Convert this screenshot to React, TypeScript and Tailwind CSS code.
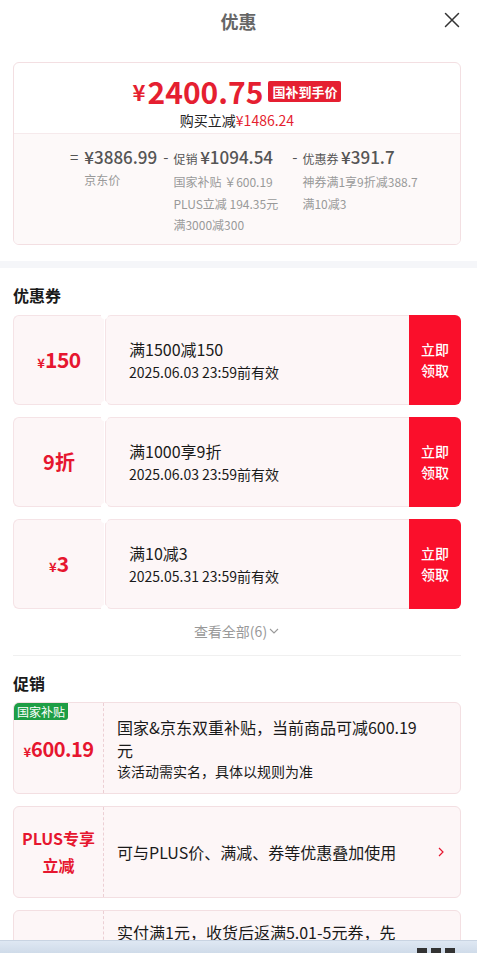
import React from "react";

const font = { fontFamily: '"Noto Sans CJK SC", "Noto Sans", sans-serif' };

function Coupon({ left, title, date }: { left: React.ReactNode; title: string; date: string }) {
  return (
    <div className="relative flex h-[90px] mb-[12px]">
      <div className="w-[91px] shrink-0 rounded-l-[6px] border border-r-0 border-[#f5e3e6] bg-[#fdf6f7] flex items-center justify-center text-[#e6162f] font-bold">
        {left}
      </div>
      <div className="w-[1px] bg-white" />
      <div className="flex-1 border border-r-0 border-[#f5e3e6] bg-[#fdf6f7] rounded-l-[6px] flex flex-col justify-center pl-[23px]">
        <div className="text-[16px] leading-[22px] text-[#1a1a1a]">{title}</div>
        <div className="text-[14px] leading-[20px] text-[#1a1a1a] mt-[2px]">{date}</div>
      </div>
      <div className="w-[52px] shrink-0 bg-[#fa0f2b] rounded-r-[6px] flex flex-col items-center justify-center text-white text-[14px] leading-[21px] font-medium">
        <span>立即</span>
        <span>领取</span>
      </div>
      <div className="absolute left-[88px] top-[-3px] w-[7px] h-[7px] rounded-full bg-white" />
      <div className="absolute left-[88px] bottom-[-3px] w-[7px] h-[7px] rounded-full bg-white" />
    </div>
  );
}

export default function App() {
  return (
    <div className="w-[477px] h-[953px] bg-white relative overflow-hidden" style={font}>
      {/* header */}
      <div className="h-[42px] relative flex items-center justify-center">
        <span className="text-[18px] font-bold text-[#666]">优惠</span>
        <svg className="absolute right-[17px] top-[12px]" width="16" height="16" viewBox="0 0 16 16">
          <path d="M1.5 1.5 L14.5 14.5 M14.5 1.5 L1.5 14.5" stroke="#333" strokeWidth="1.5" strokeLinecap="round" />
        </svg>
      </div>

      {/* summary card */}
      <div className="pl-[13px] pr-[16px] pt-[20px]">
        <div className="rounded-[6px] border border-[#f3dfe2] overflow-hidden">
          <div className="h-[71px] flex flex-col items-center pt-[12px] border-b border-[#f6eaec]">
            <div className="flex items-center h-[32px]">
              <span className="text-[#e51f31] font-bold text-[22px] leading-[32px] mr-[2px]">¥</span>
              <span className="text-[#e51f31] font-bold text-[30px] leading-[32px]">2400.75</span>
              <span className="ml-[5px] bg-[#e51f31] text-white font-bold text-[13px] leading-[21px] px-[4px] rounded-[2px]">国补到手价</span>
            </div>
            <div className="text-[14px] leading-[20px] mt-[3px] text-[#222]">
              购买立减<span className="text-[#e51f31]">¥1486.24</span>
            </div>
          </div>
          <div className="bg-[#fdf9f9] h-[110px] flex pt-[12px] pl-[56px] text-[#555]">
            <div className="flex">
              <span className="text-[15px] leading-[22px] mr-[6px]">=</span>
              <div className="flex flex-col">
                <span className="text-[17px] leading-[22px] font-medium">¥3886.99</span>
                <span className="text-[12px] leading-[22px] text-[#999] mt-[1px]">京东价</span>
              </div>
            </div>
            <div className="flex ml-[6px]">
              <span className="text-[15px] leading-[22px] mr-[5px]">-</span>
              <div className="flex flex-col">
                <span className="leading-[22px]">
                  <span className="text-[12px]">促销 </span>
                  <span className="text-[17px] font-medium">¥1094.54</span>
                </span>
                <span className="text-[12px] leading-[22px] text-[#999] mt-[1px]">国家补贴 ￥600.19</span>
                <span className="text-[12px] leading-[21px] text-[#999]">PLUS立减 194.35元</span>
                <span className="text-[12px] leading-[22px] text-[#999]">满3000减300</span>
              </div>
            </div>
            <div className="flex ml-[14px]">
              <span className="text-[15px] leading-[22px] mr-[5px]">-</span>
              <div className="flex flex-col">
                <span className="leading-[22px]">
                  <span className="text-[12px]">优惠券 </span>
                  <span className="text-[17px] font-medium">¥391.7</span>
                </span>
                <span className="text-[12px] leading-[22px] text-[#999] mt-[1px]">神券满1享9折减388.7</span>
                <span className="text-[12px] leading-[21px] text-[#999]">满10减3</span>
              </div>
            </div>
          </div>
        </div>
      </div>

      <div className="h-[7px] bg-[#f5f6f9] mt-[16px]" />

      {/* coupons */}
      <div className="pl-[13px] pr-[16px]">
        <div className="text-[16px] font-bold text-[#1a1a1a] leading-[22px] mt-[16px] mb-[9px]">优惠券</div>
        <Coupon
          left={<span className="flex items-baseline"><span className="text-[13px]">¥</span><span className="text-[21px] tracking-[-0.5px]">150</span></span>}
          title="满1500减150"
          date="2025.06.03 23:59前有效"
        />
        <Coupon left={<span className="text-[20px]">9折</span>} title="满1000享9折" date="2025.06.03 23:59前有效" />
        <Coupon
          left={<span className="flex items-baseline"><span className="text-[13px]">¥</span><span className="text-[21px]">3</span></span>}
          title="满10减3"
          date="2025.05.31 23:59前有效"
        />
        <div className="flex items-center justify-center text-[14px] text-[#999] h-[22px] mt-[-1px]">
          查看全部(6)
          <svg width="12" height="12" viewBox="0 0 12 12" className="ml-[1px]">
            <path d="M2 4 L6 8 L10 4" fill="none" stroke="#999" strokeWidth="1.1" />
          </svg>
        </div>
        <div className="h-px bg-[#f0f0f0] mt-[13px]" />

        <div className="text-[16px] font-bold text-[#1a1a1a] leading-[22px] mt-[16px] mb-[8px]">促销</div>

        <div className="relative flex h-[92px] rounded-[6px] border border-[#f3dfe2] bg-[#fdf6f7] overflow-hidden mb-[12px]">
          <div className="absolute left-0 top-0 bg-[#1e9e45] text-white text-[12px] leading-[17px] px-[3px] rounded-br-[3px]">国家补贴</div>
          <div className="w-[90px] shrink-0 flex items-center justify-center border-r border-dashed border-[#eccfd4] pt-[1px]">
            <span className="flex items-baseline text-[#e6162f] font-bold">
              <span className="text-[13px]">¥</span>
              <span className="text-[20px] tracking-[-0.5px]">600.19</span>
            </span>
          </div>
          <div className="flex-1 flex flex-col justify-center pl-[13px]">
            <div className="w-[305px] text-[16px] leading-[23px] text-[#1a1a1a]">国家&amp;京东双重补贴，当前商品可减600.19元</div>
            <div className="text-[14px] leading-[18px] text-[#1a1a1a]">该活动需实名，具体以规则为准</div>
          </div>
        </div>

        <div className="relative flex h-[92px] rounded-[6px] border border-[#f3dfe2] bg-[#fdf6f7] overflow-hidden mb-[12px]">
          <div className="w-[90px] shrink-0 flex flex-col items-center justify-center border-r border-dashed border-[#eccfd4] text-[#e6162f] font-bold text-[16px] leading-[27px]">
            <span>PLUS专享</span>
            <span>立减</span>
          </div>
          <div className="flex-1 flex items-center pl-[13px] pr-[14px]">
            <div className="flex-1 text-[16px] leading-[22px] text-[#1a1a1a]">可与PLUS价、满减、券等优惠叠加使用</div>
            <svg width="10" height="12" viewBox="0 0 10 12">
              <path d="M3 2 L7 6 L3 10" fill="none" stroke="#e6162f" strokeWidth="1.2" />
            </svg>
          </div>
        </div>

        <div className="relative flex h-[92px] rounded-[6px] border border-[#f3dfe2] bg-[#fdf6f7] overflow-hidden">
          <div className="w-[90px] shrink-0 border-r border-dashed border-[#eccfd4]" />
          <div className="flex-1 pl-[13px] pt-[10px]">
            <div className="w-[286px] text-[16px] leading-[22px] text-[#1a1a1a]">
              实付满1元，收货后返满5.01-5元券，先用后返，券有效期详见券面信息
            </div>
          </div>
        </div>
      </div>

      {/* bottom overlay bar */}
      <div className="absolute left-0 right-0 top-[940px] h-[13px] bg-gradient-to-b from-[#dfe8f3] to-[#cfdbe9] border-t border-[#c9d4e2]">
        <div className="absolute right-[22px] top-[7px] flex gap-[4px]">
          <span className="w-[10px] h-[6px] bg-[#333]" />
          <span className="w-[10px] h-[6px] bg-[#333]" />
          <span className="w-[10px] h-[6px] bg-[#333]" />
        </div>
      </div>
    </div>
  );
}
